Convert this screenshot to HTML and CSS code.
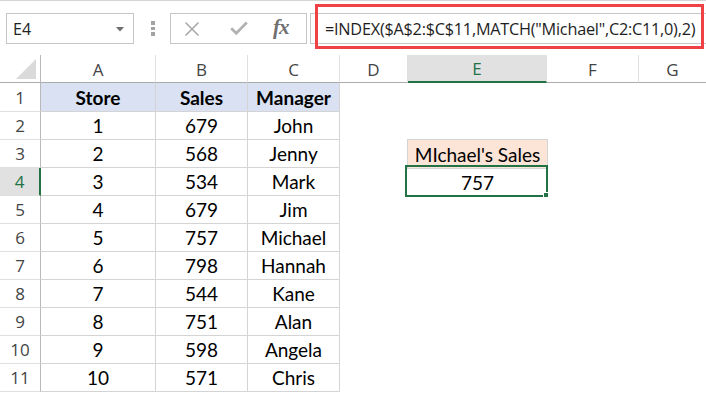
FILE: index.html
```html
<!DOCTYPE html>
<html>
<head>
<meta charset="utf-8">
<link rel="stylesheet" href="styles.css">
</head>
<body>
<div class="app">
  <div class="toolbar">
    <div class="namebox">
      <span class="namebox-text">E4</span>
      <svg class="dropdown" width="8" height="5" viewBox="0 0 8 5"><path d="M0 0H8L4 4.5Z" fill="#6e6e6e"/></svg>
    </div>
    <div class="dots"><i></i><i></i><i></i></div>
    <div class="fxbox">
      <svg class="icon-x" width="16" height="16" viewBox="0 0 16 16"><path d="M1.5 1.5L14.5 14.5M14.5 1.5L1.5 14.5" stroke="#a9a9a9" stroke-width="1.6" fill="none"/></svg>
      <svg class="icon-check" width="18" height="15" viewBox="0 0 18 15"><path d="M1.2 7.2L6.3 12.3L16.8 1.5" stroke="#b3b3b3" stroke-width="2.8" fill="none"/></svg>
      <span class="fx">fx</span>
    </div>
    <div class="formula">=INDEX($A$2:$C$11,MATCH("Michael",C2:C11,0),2)</div>
    <div class="highlight"></div>
  </div>
  <div class="sheet">
    <div class="corner"><span class="corner-tri"></span></div>
    <div class="ch">A</div><div class="ch">B</div><div class="ch">C</div><div class="ch">D</div><div class="ch active">E</div><div class="ch">F</div><div class="ch last">G</div>

    <div class="rh">1</div><div class="tb head">Store</div><div class="tb head">Sales</div><div class="tb head">Manager</div><div class="c"></div><div class="c"></div><div class="c"></div><div class="c"></div>

    <div class="rh">2</div><div class="tb">1</div><div class="tb">679</div><div class="tb">John</div><div class="c"></div><div class="c"></div><div class="c"></div><div class="c"></div>

    <div class="rh">3</div><div class="tb">2</div><div class="tb">568</div><div class="tb">Jenny</div><div class="c"></div><div class="c label">MIchael's Sales</div><div class="c"></div><div class="c"></div>

    <div class="rh active">4</div><div class="tb">3</div><div class="tb">534</div><div class="tb">Mark</div><div class="c"></div><div class="c sel">757<span class="handle"></span></div><div class="c"></div><div class="c"></div>

    <div class="rh">5</div><div class="tb">4</div><div class="tb">679</div><div class="tb">Jim</div><div class="c"></div><div class="c"></div><div class="c"></div><div class="c"></div>

    <div class="rh">6</div><div class="tb">5</div><div class="tb">757</div><div class="tb">Michael</div><div class="c"></div><div class="c"></div><div class="c"></div><div class="c"></div>

    <div class="rh">7</div><div class="tb">6</div><div class="tb">798</div><div class="tb">Hannah</div><div class="c"></div><div class="c"></div><div class="c"></div><div class="c"></div>

    <div class="rh">8</div><div class="tb">7</div><div class="tb">544</div><div class="tb">Kane</div><div class="c"></div><div class="c"></div><div class="c"></div><div class="c"></div>

    <div class="rh">9</div><div class="tb">8</div><div class="tb">751</div><div class="tb">Alan</div><div class="c"></div><div class="c"></div><div class="c"></div><div class="c"></div>

    <div class="rh">10</div><div class="tb">9</div><div class="tb">598</div><div class="tb">Angela</div><div class="c"></div><div class="c"></div><div class="c"></div><div class="c"></div>

    <div class="rh">11</div><div class="tb">10</div><div class="tb">571</div><div class="tb">Chris</div><div class="c"></div><div class="c"></div><div class="c"></div><div class="c"></div>
  </div>
</div>
</body>
</html>
```
FILE: styles.css
```css
* { box-sizing: border-box; }
html, body { margin: 0; padding: 0; background: #fff; }
body { width: 706px; height: 393px; overflow: hidden; }
.app { width: 706px; }

.toolbar {
  position: relative;
  height: 55px;
  border-top: 1px solid #d4d4d4;
  display: flex;
  align-items: flex-start;
  padding-top: 12px;
  overflow: hidden;
}
.namebox {
  margin-left: 6px;
  width: 128px;
  height: 31px;
  border: 1px solid #c6c6c6;
  background: #fff;
  display: flex;
  align-items: center;
  justify-content: space-between;
  padding: 0 9px 0 6px;
}
.namebox-text {
  font-family: "Open Sans", "Noto Sans", sans-serif;
  font-size: 16px;
  color: #222;
}
.dropdown { display: block; margin-top: 1px; }
.dots {
  margin-left: 17px;
  width: 4px;
  padding-top: 8px;
  display: flex;
  flex-direction: column;
  gap: 2px;
}
.dots i { display: block; width: 4px; height: 3.5px; background: #a3a3a3; }
.fxbox {
  margin-left: 15px;
  width: 137px;
  height: 31px;
  border: 1px solid #c6c6c6;
  display: flex;
  align-items: center;
  padding-left: 13px;
}
.icon-x { display: block; }
.icon-check { display: block; margin-left: 30px; }
.fx {
  margin-left: 25px;
  font-family: "Liberation Serif", serif;
  font-style: italic;
  font-weight: bold;
  font-size: 21px;
  color: #707070;
  letter-spacing: -1px;
  line-height: 1;
  margin-top: -3px;
}
.formula {
  margin-left: 3px;
  flex: 1;
  margin-right: -6px;
  height: 31px;
  border: 1px solid #c6c6c6;
  padding-left: 14px;
  display: flex;
  align-items: center;
  font-family: "Open Sans", "Noto Sans", sans-serif;
  font-size: 16.3px;
  color: #1e1e1e;
  white-space: nowrap;
  letter-spacing: -0.25px;
}
.highlight {
  position: absolute;
  left: 315px;
  top: 3px;
  width: 389px;
  height: 45px;
  border: 3.5px solid #ef4146;
}

.sheet {
  display: grid;
  grid-template-columns: 41px 115px 92px 92px 68px 139px 92px 1fr;
  grid-template-rows: 28px 29px repeat(10, 28px);
}
.sheet > div {
  display: flex;
  align-items: center;
  justify-content: center;
  white-space: nowrap;
}
.corner {
  border-right: 1px solid #b9b9b9;
  border-bottom: 1px solid #ababab;
  position: relative;
}
.corner-tri {
  position: absolute;
  left: 16px;
  top: 4px;
  width: 0;
  height: 0;
  border-left: 20px solid transparent;
  border-bottom: 20px solid #dadada;
}
.ch {
  border-right: 1px solid #e0e0e0;
  border-bottom: 1px solid #ababab;
  font-family: "Open Sans", "Noto Sans", sans-serif;
  font-size: 17px;
  color: #444;
  padding-top: 1px;
}
.ch.last { border-right: none; }
.ch.active {
  background: #e1e1e1;
  color: #217346;
  border-bottom: 2px solid #217346;
}
.rh {
  border-right: 1px solid #b9b9b9;
  border-bottom: 1px solid #e0e0e0;
  font-family: "Open Sans", "Noto Sans", sans-serif;
  font-size: 17px;
  color: #444;
}
.rh.active {
  background: #e1e1e1;
  color: #217346;
  border-right: 2px solid #217346;
}
.tb, .c {
  font-family: Lato, "Liberation Sans", sans-serif;
  font-size: 19px;
  color: #000;
}
.tb {
  border-right: 1px solid #d4d4d4;
  border-bottom: 1px solid #d4d4d4;
}
.tb.head {
  background: #d9e1f2;
  font-weight: bold;
}
.label {
  background: #fce4d6;
  outline: 1px solid #d4d4d4;
}
.sel { position: relative; }
.sel::after {
  content: "";
  position: absolute;
  left: -3px;
  top: -3px;
  right: -1px;
  bottom: -1px;
  border: 2px solid #217346;
}
.handle {
  position: absolute;
  right: -2px;
  bottom: -2px;
  width: 6px;
  height: 6px;
  background: #217346;
  border: 1px solid #fff;
  z-index: 1;
}
```
